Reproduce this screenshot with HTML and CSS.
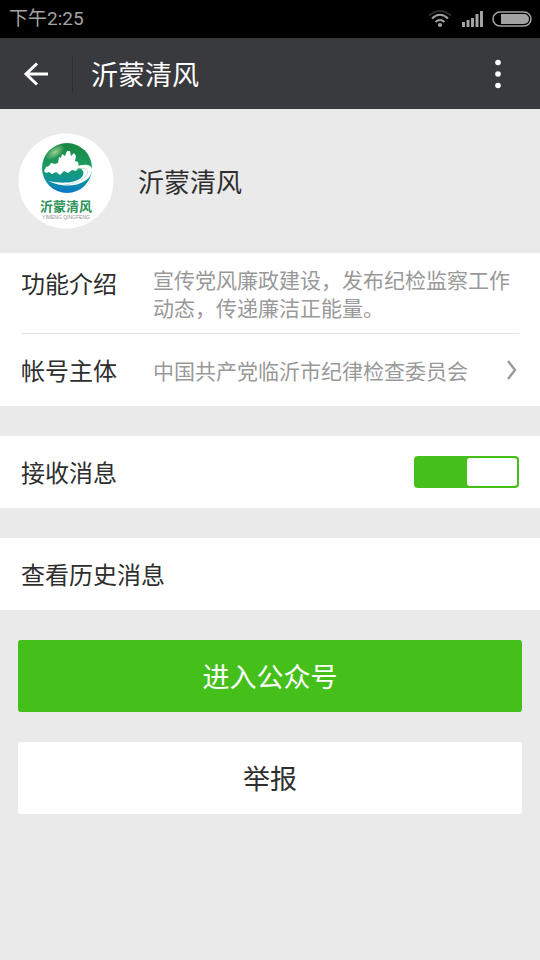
FILE: index.html
```html
<!DOCTYPE html>
<html lang="zh-CN">
<head>
<meta charset="utf-8">
<meta name="viewport" content="width=device-width, initial-scale=1">
<title>沂蒙清风</title>
<link rel="stylesheet" href="styles.css">
</head>
<body>
<div class="status">
  <span class="status-time">下午2:25</span>
  <svg class="status-icons" width="106" height="20" viewBox="0 0 106 20" aria-hidden="true">
    <g fill="none" stroke-width="2">
      <path d="M1 6.500Q12 -2.500 23 6.500" stroke="#2c2c2c"/>
      <path d="M4 9.500Q12 2 20 9.500" stroke="#a3a3a3"/>
      <path d="M7.500 13Q12 9 16.500 13" stroke="#a3a3a3"/>
    </g>
    <circle cx="12" cy="16" r="2" fill="#a3a3a3"/>
    <path d="M34 13h3v5h-3zM38.500 11h3v7h-3zM43 9h3v9h-3zM47.500 5h3v13h-3zM52 2h3v16h-3z" fill="#a3a3a3"/>
    <rect x="65" y="3" width="38" height="14" rx="7" fill="none" stroke="#a3a3a3" stroke-width="1.500"/>
    <path d="M73 5h23a5 5 0 0 1 0 10H73z" fill="#a3a3a3"/>
  </svg>
</div>
<header class="bar">
  <button class="back" type="button" aria-label="返回">
    <svg width="26" height="26" viewBox="0 0 26 26" fill="none" stroke="#fff" stroke-width="3"><path d="M14 2.500L3 13L14 23.500M3 13H25"/></svg>
  </button>
  <h1 class="title">沂蒙清风</h1>
  <button class="more" type="button" aria-label="更多">
    <svg width="8" height="32" viewBox="0 0 8 32" fill="#fff"><circle cx="4" cy="4.500" r="2.800"/><circle cx="4" cy="16" r="2.800"/><circle cx="4" cy="27.500" r="2.800"/></svg>
  </button>
</header>
<main>
  <section class="profile">
    <svg class="avatar" width="96" height="96" viewBox="0 0 96 96" role="img" aria-label="沂蒙清风">
      <defs>
        <linearGradient id="globe" x1="0" y1="0" x2="0" y2="1">
          <stop offset="0" stop-color="#18843f"/><stop offset=".45" stop-color="#1c9c62"/><stop offset=".75" stop-color="#10949a"/><stop offset="1" stop-color="#0876cc"/>
        </linearGradient>
        <radialGradient id="shine"><stop offset="0" stop-color="#b9e3a6" stop-opacity=".8"/><stop offset="1" stop-color="#b9e3a6" stop-opacity="0"/></radialGradient>
      </defs>
      <circle cx="48" cy="48" r="47.500" fill="#fff"/>
      <circle cx="49" cy="35" r="25" fill="url(#globe)"/>
      <ellipse cx="37" cy="19" rx="11" ry="6" fill="url(#shine)" transform="rotate(-35 37 19)"/>
      <path d="M26 38L28 34L31 33L33 30L37 31L40 30L41 24L43 25L44 21L47 23L49 18L52 18L53 23L56 20L58 23L57 28L60 29L61 34L58 38L54 37L50 40L46 38L42 42L38 39L34 41L31 39L28 40Z" fill="#fff"/>
      <path d="M58 34C66 30 75 31 74 38C72 50 52 58 30 48C45 51 57 50 63 45C68 40 65 35 58 34Z" fill="#fff"/>
      <path d="M60 36C68 34 71 37 69 41C66 47 57 51 46 52" fill="none" stroke="#a9dccb" stroke-width=".8"/>
      <text class="logo-name" x="48" y="78" text-anchor="middle">沂蒙清风</text>
      <text class="logo-latin" x="48" y="86" text-anchor="middle">YIMENG QINGFENG</text>
    </svg>
    <h2 class="name">沂蒙清风</h2>
  </section>
  <dl class="card">
    <div class="row intro">
      <dt>功能介绍</dt>
      <dd>宣传党风廉政建设，发布纪检监察工作动态，传递廉洁正能量。</dd>
    </div>
    <div class="row owner">
      <dt>帐号主体</dt>
      <dd>中国共产党临沂市纪律检查委员会</dd>
      <svg class="chevron" width="14" height="22" viewBox="0 0 14 22" fill="none" stroke="#999" stroke-width="2.400" aria-hidden="true"><path d="M3 2L10 11L3 20"/></svg>
    </div>
  </dl>
  <label class="card item">
    <span>接收消息</span>
    <input class="switch" type="checkbox" role="switch" checked>
  </label>
  <a class="card item" href="#history">查看历史消息</a>
  <div class="actions">
    <button class="action primary" type="button">进入公众号</button>
    <button class="action" type="button">举报</button>
  </div>
</main>
</body>
</html>
```
FILE: styles.css
```css
* { box-sizing: border-box; }
body {
  margin: 0;
  background: #eaeaea;
  color: #2e2e2e;
  font-family: "Noto Sans CJK SC", sans-serif;
  font-size: 24px;
  line-height: 36px;
}
h1, h2, dl, dd { margin: 0; font-weight: 400; }
button { font: inherit; color: inherit; border: 0; padding: 0; background: none; }
svg { display: block; flex: none; }

.status {
  display: flex;
  align-items: center;
  justify-content: space-between;
  height: 38px;
  padding: 0 6px 0 9px;
  background: #000;
  color: #a3a3a3;
  font-family: Roboto, "Noto Sans CJK SC", sans-serif;
  font-size: 19px;
}
.bar {
  display: flex;
  align-items: center;
  height: 71px;
  background: #393a3e;
  color: #fff;
}
.back {
  display: flex;
  justify-content: center;
  align-items: center;
  width: 73px;
  height: 36px;
  border-right: 1px solid #2c2d30;
}
.title { flex: 1; padding-left: 18px; font-size: 27px; }
.more { display: flex; justify-content: center; width: 48px; margin-right: 18px; }

.profile {
  display: flex;
  align-items: center;
  gap: 24px;
  padding: 24px 18px;
}
.name { font-size: 26px; }
.logo-name { font-size: 13px; font-weight: 700; fill: #2b9358; }
.logo-latin { font-family: "Liberation Sans", sans-serif; font-size: 5px; fill: #8a9691; }

.card { margin-bottom: 30px; background: #fff; }
.row {
  display: flex;
  margin: 0 21px;
}
.row dt { flex: none; width: 132px; }
.row dd { flex: 1; color: #999; font-size: 21px; line-height: 28px; }
.intro { padding: 12px 0; border-bottom: 1px solid #e2e2e2; }
.owner { align-items: center; height: 72px; }
.item {
  display: flex;
  align-items: center;
  justify-content: space-between;
  height: 72px;
  padding: 0 21px;
  color: inherit;
  text-decoration: none;
}
.switch {
  appearance: none;
  width: 105px;
  height: 32px;
  margin: 0;
  border: 2px solid #45c01a;
  border-radius: 4px;
  background: #fff;
}
.switch::before {
  content: "";
  display: block;
  width: 50%;
  height: 100%;
  margin-left: auto;
  border-radius: 3px;
  background: #fff;
}
.switch:checked { background: #45c01a; }
.switch:not(:checked)::before { margin-left: 0; background: #ccc; }

.actions { display: grid; gap: 30px; padding: 0 18px 30px; }
.action {
  height: 72px;
  border-radius: 3px;
  background: #fff;
  font-size: 27px;
}
.primary { background: #45c01a; color: #fff; }
```
